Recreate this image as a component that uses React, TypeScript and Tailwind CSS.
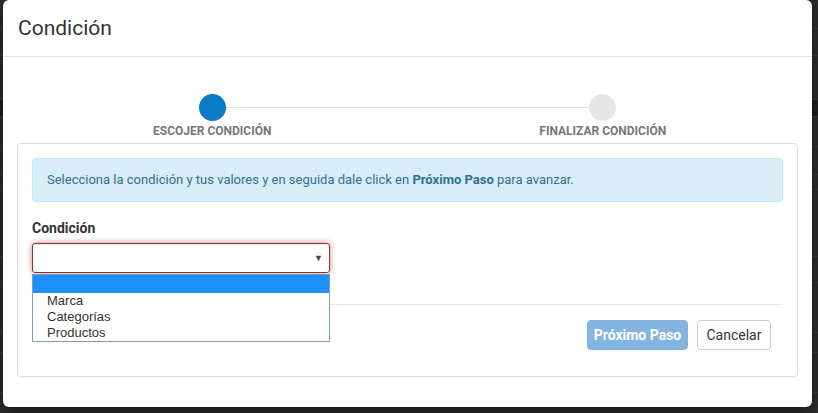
const options = ["Marca", "Categorías", "Productos"];

const Step = ({ label, active }: { label: string; active?: boolean }) => {
  return (
    <div className="relative flex w-1/2 flex-col items-center">
      <div
        className={`relative z-10 h-[27px] w-[27px] rounded-full ${
          active ? "bg-[#0a7bc6]" : "bg-[#e6e6e6]"
        }`}
      />
      <span className="mt-[3px] text-[12px] leading-[14px] font-bold text-[#777] uppercase">
        {label}
      </span>
    </div>
  );
};

const Backdrop = () => {
  const rows = [29, 27, 44, 17, 30, 28, 15, 67, 26, 50, 20, 40, 40];
  return (
    <div className="flex flex-col">
      {rows.map((h, i) => (
        <div
          key={i}
          className={`border-b border-[#3a3a3a] ${i === 3 ? "bg-[#1e1e1e]" : ""}`}
          style={{ height: h }}
        />
      ))}
    </div>
  );
};

export default function App() {
  return (
    <div className="relative h-[413px] w-[818px] overflow-hidden bg-[#2d2d2d] font-['Roboto',sans-serif] text-[#333]">
      <Backdrop />

      <div className="absolute top-0 left-[3px] flex h-[407px] w-[809px] flex-col rounded-[6px] bg-white shadow-[0_5px_15px_rgba(0,0,0,0.5)]">
        <div className="flex h-[57px] items-center border-b border-[#e5e5e5] px-[15px]">
          <h4 className="text-[21px] leading-none text-[#333]">Condición</h4>
        </div>

        <div className="flex flex-col px-[14px]">
          <div className="relative flex pt-[37px] pb-[5px]">
            <div className="absolute top-[50px] right-[195px] left-[195px] h-px bg-[#e0e0e0]" />
            <Step label="Escojer condición" active />
            <Step label="Finalizar condición" />
          </div>

          <div className="flex h-[234px] flex-col rounded-[4px] border border-[#ddd] px-[14px] pt-[14px] shadow-[0_1px_1px_rgba(0,0,0,0.05)]">
            <div className="rounded-[4px] border border-[#bce8f1] bg-[#d9edf7] px-[14px] py-[11px] text-[13px] leading-[20px] text-[#31708f]">
              Selecciona la condición y tus valores y en seguida dale click en{" "}
              <b>Próximo Paso</b> para avanzar.
            </div>

            <label className="mt-[16px] mb-[5px] text-[14px] leading-[20px] font-bold text-[#333]">
              Condición
            </label>

            <div className="relative w-[298px]">
              <div className="flex h-[30px] items-center justify-end rounded-[3px] border border-[#843534] pr-[6px] shadow-[inset_0_1px_1px_rgba(0,0,0,0.075),0_0_6px_#ce8483]">
                <span className="text-[9px] leading-none text-[#444]">▼</span>
              </div>
              <ul className="absolute top-[31px] left-0 z-20 w-[298px] border border-[#7f9db9] bg-white font-['Liberation_Sans',Arial,sans-serif] text-[13px] text-[#333]">
                <li className="h-[18px] bg-[#1e90ff]" />
                {options.map((o) => (
                  <li key={o} className="h-[16px] pl-[14px] leading-[16px]">
                    {o}
                  </li>
                ))}
              </ul>
            </div>

            <div className="mt-[31px] border-t border-[#e5e5e5]" />

            <div className="mt-[15px] flex justify-end gap-[9px] pr-[12px]">
              <button className="h-[30px] w-[101px] rounded-[4px] border border-[#7fb2de] bg-[#84b4e0] text-[14px] font-bold text-white">
                Próximo Paso
              </button>
              <button className="h-[30px] w-[74px] rounded-[4px] border border-[#ccc] bg-white text-[14px] text-[#333]">
                Cancelar
              </button>
            </div>
          </div>
        </div>
      </div>
    </div>
  );
}
